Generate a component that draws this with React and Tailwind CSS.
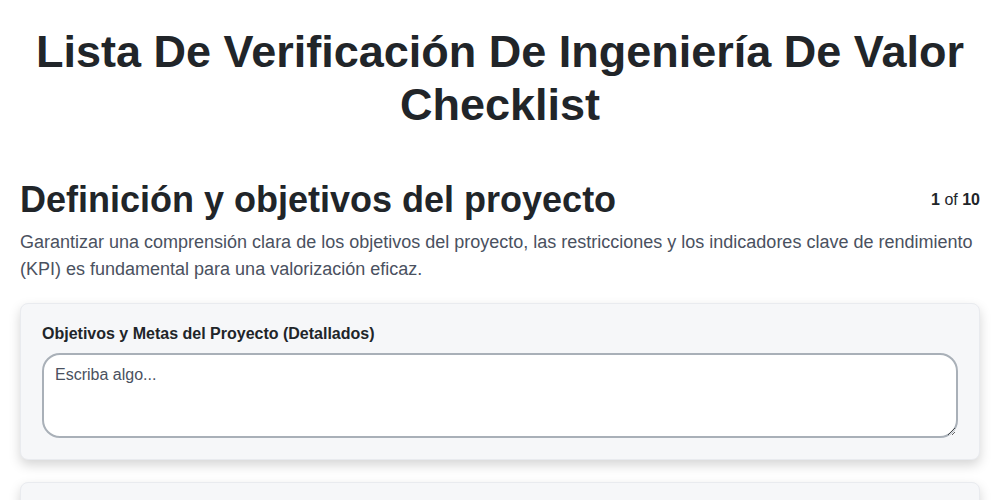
export default function App() {
  return (
    <div className="min-h-screen bg-white font-['Liberation_Sans',Arial,sans-serif] text-[#212529]">
      <div className="px-5 pt-[25px]">
        <h1 className="text-center text-[45px] font-bold leading-[1.18]">
          Lista De Verificación De Ingeniería De Valor Checklist
        </h1>

        <div className="mt-[47px] flex items-start justify-between">
          <h2 className="text-[36px] font-bold leading-[1.2]">Definición y objetivos del proyecto</h2>
          <div className="pt-[10px] text-base">
            <span className="font-bold">1</span> of <span className="font-bold">10</span>
          </div>
        </div>
        <p className="mt-2 text-lg leading-[1.5] text-[#4a5160]">
          Garantizar una comprensión clara de los objetivos del proyecto, las restricciones y los indicadores clave de
          rendimiento (KPI) es fundamental para una valorización eficaz.
        </p>

        <div className="mt-[20px] flex flex-col gap-[22px]">
          {/* Field card */}
          <div className="rounded-lg border border-[#e9ebef] bg-[#f6f7f9] px-[21px] pb-[21px] pt-[18px] shadow-[0_5px_12px_rgba(0,0,0,0.17)]">
            <label className="block text-base font-bold leading-6">Objetivos y Metas del Proyecto (Detallados)</label>
            <textarea
              rows={3}
              placeholder="Escriba algo..."
              className="mt-[7px] block h-[85px] w-full rounded-[18px] border-2 border-[#a9b0b8] bg-white px-[11px] py-2 text-base leading-6 text-[#212529] placeholder:text-[#4a5160] outline-none"
            />
          </div>
          <div className="h-[80px] rounded-lg border border-[#e9ebef] bg-[#f6f7f9] shadow-[0_5px_12px_rgba(0,0,0,0.17)]" />
        </div>
      </div>
    </div>
  );
}
